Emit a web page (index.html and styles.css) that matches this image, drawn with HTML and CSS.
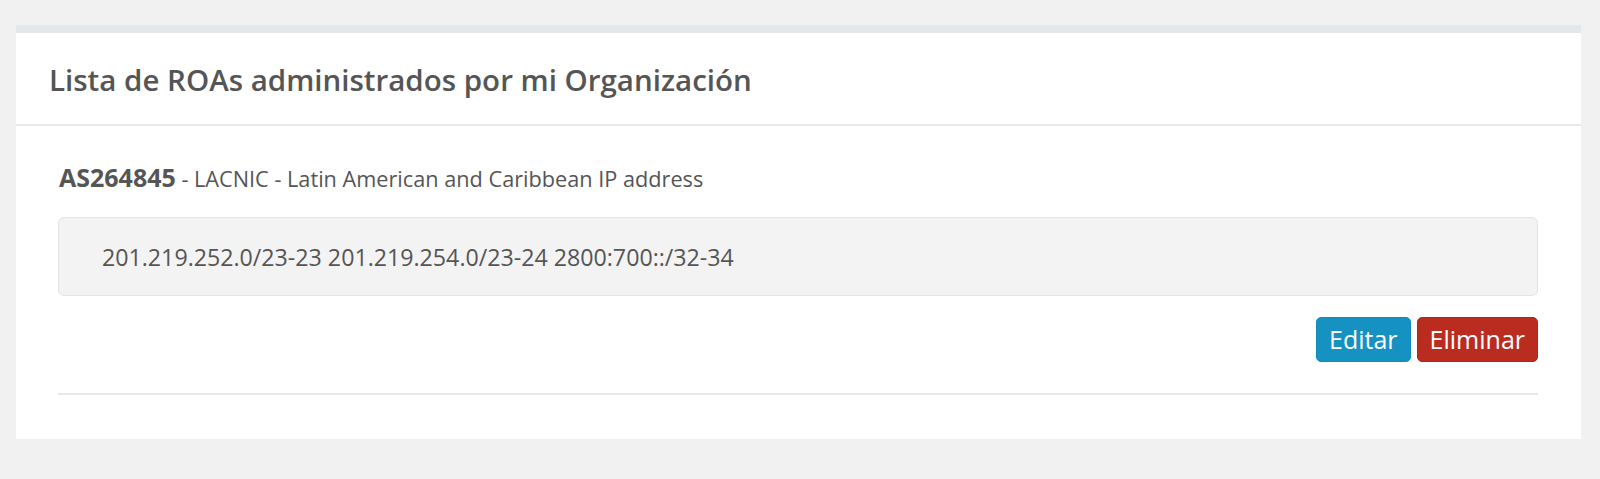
FILE: index.html
```html
<!DOCTYPE html>
<html lang="es">
<head>
<meta charset="utf-8">
<title>ROAs</title>
<link rel="stylesheet" href="styles.css">
</head>
<body>
<div class="page">
  <section class="panel">
    <header class="panel-header">
      <h3 class="panel-title">Lista de ROAs administrados por mi Organización</h3>
    </header>
    <div class="panel-body">
      <p class="as-line"><strong>AS264845</strong> - LACNIC - Latin American and Caribbean IP address</p>
      <div class="prefix-box">201.219.252.0/23-23 201.219.254.0/23-24 2800:700::/32-34</div>
      <div class="actions">
        <button class="btn btn-info">Editar</button>
        <button class="btn btn-danger">Eliminar</button>
      </div>
      <hr class="divider">
    </div>
  </section>
</div>
</body>
</html>
```
FILE: styles.css
```css
html, body {
  margin: 0;
  padding: 0;
}
body {
  background: #f1f1f1;
  font-family: "Open Sans", "Liberation Sans", sans-serif;
  color: #555;
}
.page {
  padding: 25px 19px 0 16px;
}
.panel {
  background: #fff;
  border-top: 8px solid #e4e7ea;
}
.panel-header {
  height: 91px;
  border-bottom: 2px solid #e6e9ec;
  display: flex;
  align-items: center;
  padding: 0 33px;
}
.panel-title {
  margin: 0;
  font-size: 29.5px;
  font-weight: 600;
  color: #555;
  position: relative;
  top: 1px;
}
.panel-body {
  padding: 35px 43px 44px 42px;
}
.as-line {
  margin: 0 0 22px 1px;
  font-size: 21.7px;
  color: #555;
  line-height: 32px;
}
.as-line strong {
  font-weight: 700;
  font-size: 25px;
}
.prefix-box {
  background: #f3f3f3;
  border: 1px solid #e3e3e3;
  border-radius: 6px;
  height: 79px;
  box-sizing: border-box;
  display: flex;
  align-items: center;
  padding: 0 43px;
  font-size: 23.2px;
  color: #555;
}
.actions {
  display: flex;
  justify-content: flex-end;
  gap: 6px;
  margin-top: 21px;
}
.btn {
  font-family: "Open Sans", "Liberation Sans", sans-serif;
  font-size: 25px;
  color: #fff;
  border: 1px solid transparent;
  border-radius: 5px;
  height: 45px;
  padding: 0 12px;
  line-height: 43px;
}
.btn-info {
  background: #1591c2;
  border-color: #1289b9;
}
.btn-danger {
  background: #bb2c20;
  border-color: #b0281d;
}
.divider {
  border: 0;
  border-top: 2px solid #e6e9ec;
  margin: 31px 0 0;
}
```
